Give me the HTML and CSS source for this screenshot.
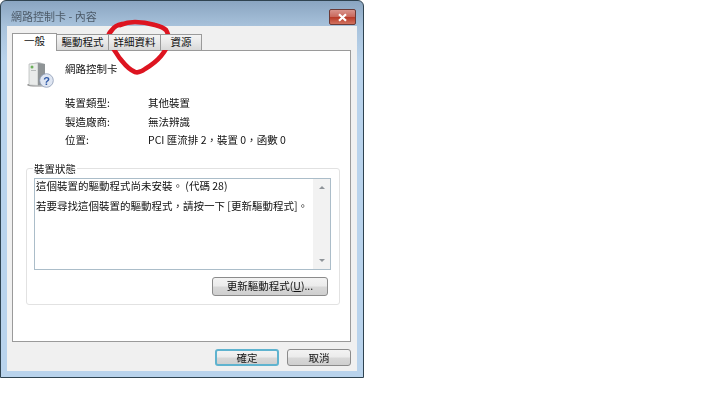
FILE: index.html
```html
<!DOCTYPE html>
<html lang="zh-Hant">
<head>
    <meta charset="UTF-8">
    <meta name="viewport" content="width=device-width, initial-scale=1.0">
    <title>網路控制卡 - 內容</title>
    <link rel="stylesheet" href="styles.css">
</head>
<body>
    <div class="window">
        <div class="titlebar">
            <span class="title">網路控制卡 - 內容</span>
            <button class="close" aria-label="關閉">
                <svg width="11" height="9" viewBox="0 0 11 9">
                    <path d="M2 1.2 L9 7.8 M9 1.2 L2 7.8" stroke="#fff" stroke-width="2.2" fill="none"/>
                </svg>
            </button>
        </div>
        <div class="client">
            <div class="tabs">
                <div class="tab tab-active">一般</div>
                <div class="tab tab-driver">驅動程式</div>
                <div class="tab tab-details">詳細資料</div>
                <div class="tab tab-res">資源</div>
            </div>
            <div class="pane">
                <div class="device">
                    <svg class="device-icon" width="30" height="30" viewBox="0 0 30 30">
                        <ellipse cx="12" cy="26" rx="10" ry="1.6" fill="#8d8d8d"/>
                        <path d="M4 5 L14 3 L20 5 L20 26 L14 27 L4 26 Z" fill="#c9cdce"/>
                        <path d="M4 5 L13 4 L13 26.5 L4 26 Z" fill="#e9ebea" stroke="#a9adad" stroke-width="0.6"/>
                        <path d="M13 4 L20 5 L20 26 L13 26.5 Z" fill="#8f9496"/>
                        <circle cx="7" cy="8" r="1.5" fill="#6cb05a"/>
                        <rect x="6" y="11" width="5" height="1" fill="#b8bcbc"/>
                        <circle cx="21.5" cy="21.5" r="6.8" fill="#dfe6f2" stroke="#8d9ab4" stroke-width="0.8"/>
                        <text class="question" x="21.5" y="25.5" text-anchor="middle">?</text>
                    </svg>
                    <span class="device-name">網路控制卡</span>
                </div>
                <div class="props">
                    <span>裝置類型:</span><span>其他裝置</span>
                    <span>製造廠商:</span><span>無法辨識</span>
                    <span>位置:</span><span>PCI 匯流排 2，裝置 0，函數 0</span>
                </div>
                <div class="status-group">
                    <span class="legend">裝置狀態</span>
                    <div class="status-box">
                        <div class="status-text">
                            <p>這個裝置的驅動程式尚未安裝。 (代碼 28)</p>
                            <p>若要尋找這個裝置的驅動程式，請按一下 [更新驅動程式]。</p>
                        </div>
                        <div class="scrollbar">
                            <span class="arrow arrow-up"></span>
                            <span class="arrow arrow-down"></span>
                        </div>
                    </div>
                    <div class="status-actions">
                        <button class="btn btn-update">更新驅動程式(<u>U</u>)...</button>
                    </div>
                </div>
            </div>
            <div class="footer">
                <button class="btn btn-ok">確定</button>
                <button class="btn btn-cancel">取消</button>
            </div>
        </div>
        <svg class="scribble" width="75" height="65" viewBox="0 0 75 65">
            <path d="M21 8 C16 9 13 11 11 14 C8 17 7 19 7 22 C7 26 9 29 12 32 C15 36 17 41 21 45 C25 50 29 54 34 56 C37 57 40 56 44 53 C49 50 55 46 60 40 C64 35 67 31 68 26 C68 21 67 17 65 14 C62 11 58 10 54 9 C47 7 40 6 34 6 C29 6 24 7 19 9" fill="none" stroke="#dd1420" stroke-width="4.6" stroke-linecap="round"/>
        </svg>
    </div>
</body>
</html>
```
FILE: styles.css
```css
html, body {
    margin: 0;
    height: 404px;
    overflow: hidden;
    background-color: #fff;
}
body, button {
    font-family: "Noto Sans CJK TC", "Liberation Sans", sans-serif;
    font-size: 10.5px;
    color: #111;
}
.window {
    position: relative;
    box-sizing: border-box;
    width: 364px;
    height: 378px;
    display: flex;
    flex-direction: column;
    border: 1px solid #2f4350;
    border-radius: 6px 6px 0 0;
    background: linear-gradient(to bottom, #8aa5c1 0, #a9c3dc 26px, #b9d3ec 60px, #b9d3ec 100%);
    filter: blur(0.3px);
}
.titlebar {
    height: 25px;
    flex: none;
    display: flex;
    align-items: flex-start;
    justify-content: space-between;
    padding: 8px 7px 0 10px;
    box-sizing: border-box;
}
.title {
    font-size: 11px;
    line-height: 14px;
    color: #4c5a68;
}
.close {
    width: 27px;
    height: 16px;
    padding: 0;
    border: 1px solid #6b3a36;
    border-radius: 2px;
    display: flex;
    align-items: center;
    justify-content: center;
    background: linear-gradient(to bottom, #d9948c 0, #c9685c 48%, #b83a28 52%, #d2725f 100%);
}
.client {
    flex: 1;
    margin: 0 6px 6px 6px;
    padding: 6px 6px 0 5px;
    display: flex;
    flex-direction: column;
    background-color: #f0f0f0;
}
.tabs {
    display: flex;
    align-items: flex-end;
    height: 18px;
    flex: none;
    position: relative;
    z-index: 1;
}
.tab {
    box-sizing: border-box;
    height: 16px;
    line-height: 13px;
    text-align: center;
    border: 1px solid #9a9a9a;
    border-bottom: none;
    border-left: none;
    background: linear-gradient(to bottom, #f4f4f4 0, #e8e8e8 50%, #d8d8d8 100%);
}
.tab-active {
    width: 45px;
    height: 18px;
    margin-bottom: -1px;
    line-height: 13px;
    border-left: 1px solid #9a9a9a;
    background: #fff;
}
.tab-driver { width: 52px; }
.tab-details { width: 52px; }
.tab-res { width: 41px; }
.pane {
    flex: none;
    box-sizing: border-box;
    height: 292px;
    padding: 11px 10px 0 13px;
    border: 1px solid #9a9a9a;
    background-color: #fff;
}
.device {
    display: flex;
    align-items: flex-start;
    height: 34px;
}
.device-icon {
    margin-top: -3px;
    margin-left: -1px;
    flex: none;
}
.device-name {
    margin-left: 10px;
    line-height: 13px;
}
.question {
    font-family: "Liberation Sans", sans-serif;
    font-size: 11px;
    font-weight: bold;
    fill: #2f5aa8;
}
.props {
    display: grid;
    grid-template-columns: 83px 1fr;
    grid-auto-rows: 18.5px;
    padding-left: 39px;
    line-height: 14px;
}
.status-group {
    position: relative;
    box-sizing: border-box;
    height: 137px;
    margin-top: 16px;
    padding: 9px 8px 0 7px;
    border: 1px solid #e2e2e2;
    border-radius: 3px;
}
.legend {
    position: absolute;
    top: -7px;
    left: 6px;
    padding: 0 1px;
    line-height: 14px;
    background-color: #fff;
}
.status-box {
    display: flex;
    height: 92px;
    box-sizing: border-box;
    border: 1px solid #abbdc9;
}
.status-text {
    flex: 1;
    padding: 0 1px;
}
.status-text p {
    margin: 0 0 6px;
    line-height: 14px;
}
.scrollbar {
    width: 17px;
    flex: none;
    display: flex;
    flex-direction: column;
    justify-content: space-between;
    align-items: center;
    padding: 7px 0;
    box-sizing: border-box;
    background-color: #f2f2f2;
}
.arrow {
    width: 0;
    height: 0;
    border-left: 3px solid transparent;
    border-right: 3px solid transparent;
}
.arrow-up { border-bottom: 3px solid #8f9499; }
.arrow-down { border-top: 3px solid #8f9499; }
.status-actions {
    display: flex;
    justify-content: flex-end;
    margin-top: 7px;
}
.btn {
    box-sizing: border-box;
    padding: 0;
    border: 1px solid #8b8b8b;
    border-radius: 3px;
    background: linear-gradient(to bottom, #f3f3f3 0, #ebebeb 48%, #d8d8d8 52%, #cfcfcf 100%);
    line-height: 14px;
}
.btn-update {
    width: 116px;
    height: 19px;
    margin-right: 3px;
}
.footer {
    flex: 1;
    display: flex;
    justify-content: flex-end;
    align-items: flex-start;
    gap: 8px;
    padding-top: 7px;
}
.btn-ok,
.btn-cancel {
    width: 64px;
    height: 17px;
}
.btn-ok {
    border: 2px solid #5fb3cf;
    line-height: 12px;
}
.scribble {
    position: absolute;
    top: 15px;
    left: 100px;
    pointer-events: none;
}
```
